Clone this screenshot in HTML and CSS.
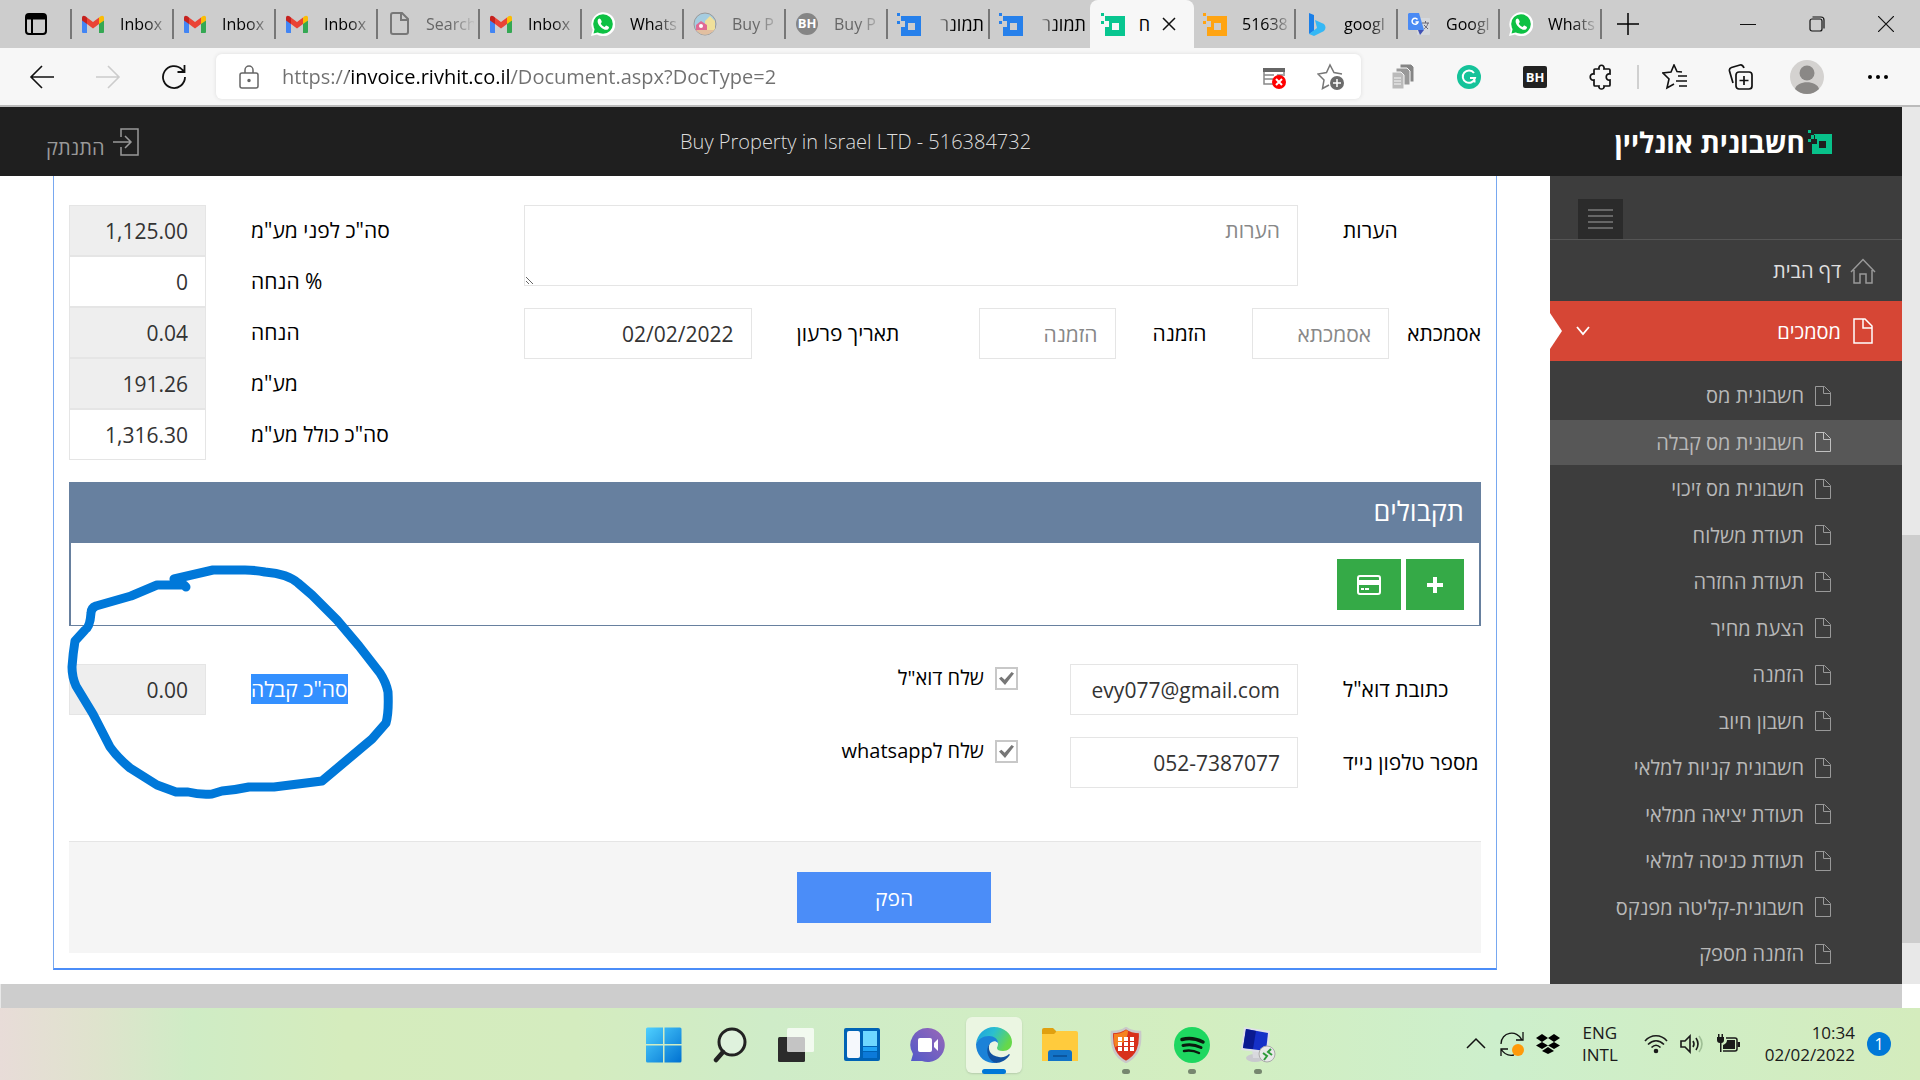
FILE: index.html
```html
<!DOCTYPE html>
<html lang="he">
<head>
    <meta charset="UTF-8">
    <meta name="viewport" content="width=device-width, initial-scale=1.0">
    <title>חשבונית אונליין</title>
    <link rel="stylesheet" href="styles.css">
</head>
<body>

    <!-- shared icons -->
    <svg class="sprite" width="0" height="0">
        <symbol id="gmail" viewBox="0 0 24 24">
            <path fill="#4285f4" d="M1 8v12a1 1 0 0 0 1 1h4V11z"/>
            <path fill="#34a853" d="M23 8v12a1 1 0 0 1-1 1h-4V11z"/>
            <path fill="#fbbc04" d="M18 5.500l1.500-1.200C21.500 3 23 4 23 6v2.500L18 12z"/>
            <path fill="#c5221f" d="M6 5.500L4.500 4.300C2.500 3 1 4 1 6v2.500L6 12z"/>
            <path fill="#ea4335" d="M6 5.500l6 4.500 6-4.500V12l-6 4.500L6 12z"/>
        </symbol>
        <symbol id="whatsapp" viewBox="0 0 24 24">
            <path fill="#fff" d="M0 24l1.700-6.200A12 12 0 1 1 6 22.400z"/>
            <circle cx="12" cy="12" r="9.800" fill="#0dc143"/>
            <path fill="#0dc143" d="M2.500 21.500l1.500-6 4.500 4.500z"/>
            <path fill="#fff" d="M8.600 6.500c-.4-.1-2 .6-2 2.700 0 4 5.200 8.600 8.700 8.600 1.600 0 2.700-1.200 2.700-2.600 0-.5-2.600-1.900-3-1.700l-1.300 1.500c-1.500-.5-3.200-2-3.900-3.600l1-1.400c.1-.5-1.200-3.400-2.200-3.500z"/>
        </symbol>
        <symbol id="pixel" viewBox="0 0 24 24">
            <path fill="currentColor" fill-rule="evenodd" d="M4 4h20v20H4v-9h4V9H4zM11 11v7h7v-7zM0 1h3v3H0zM0 9h3v3H0z"/>
        </symbol>
        <symbol id="page" viewBox="0 0 16 22">
            <path fill="none" stroke="currentColor" d="M.5 1.500h9l6 6v13H.5zM8.500 1.500v7h7"/>
        </symbol>
    </svg>

    <div class="tabs">
        <button class="tab-menu" aria-label="Tab actions">
            <svg width="24" height="24" viewBox="0 0 24 24" fill="none" stroke="#000" stroke-width="2"><rect x="2" y="2" width="20" height="20" rx="3"/><path d="M2 5h20" stroke-width="5"/><path d="M8 7v15"/></svg>
        </button>
        <button class="tab"><svg class="tab-icon"><use href="#gmail"/></svg><span class="tab-title">Inbox</span></button>
        <button class="tab"><svg class="tab-icon"><use href="#gmail"/></svg><span class="tab-title">Inbox</span></button>
        <button class="tab"><svg class="tab-icon"><use href="#gmail"/></svg><span class="tab-title">Inbox</span></button>
        <button class="tab dim"><svg class="tab-icon" viewBox="0 0 24 24" fill="none" stroke="#777" stroke-width="2"><path d="M6 1h9l6 6v13a2 2 0 0 1-2 2H6a2 2 0 0 1-2-2V3a2 2 0 0 1 2-2zM14 1v7h7"/></svg><span class="tab-title">Search</span></button>
        <button class="tab"><svg class="tab-icon"><use href="#gmail"/></svg><span class="tab-title">Inbox</span></button>
        <button class="tab"><svg class="tab-icon"><use href="#whatsapp"/></svg><span class="tab-title">Whats</span></button>
        <button class="tab dim"><svg class="tab-icon" viewBox="0 0 24 24"><circle cx="12" cy="12" r="11" fill="#a5cde0" stroke="#999"/><path fill="#f0e09a" d="M12 19V9l5-5 5 5v8l-3 3z"/><path fill="#e06a94" d="M3 19v-6l5-4 6 4v6z"/><path fill="#e2bfa0" d="M3 18h18a11 11 0 0 1-18 0z"/><circle cx="8" cy="14" r="2" fill="#fff"/></svg><span class="tab-title">Buy P</span></button>
        <button class="tab dim"><svg class="tab-icon" viewBox="0 0 24 24"><circle cx="12" cy="12" r="11" fill="#858585"/><text class="bh" x="12" y="16">BH</text></svg><span class="tab-title">Buy P</span></button>
        <button class="tab he"><svg class="tab-icon blue"><use href="#pixel"/></svg><span class="tab-title" dir="rtl">תמונר</span></button>
        <button class="tab he"><svg class="tab-icon blue"><use href="#pixel"/></svg><span class="tab-title" dir="rtl">תמונר</span></button>
        <button class="tab active"><svg class="tab-icon green"><use href="#pixel"/></svg><span class="tab-title" dir="rtl">ח</span><svg width="14" height="14" viewBox="0 0 14 14" stroke="#111" stroke-width="1.500"><path d="M1 1l12 12M13 1L1 13"/></svg></button>
        <button class="tab"><svg class="tab-icon orange"><use href="#pixel"/></svg><span class="tab-title">51638</span></button>
        <button class="tab"><svg class="tab-icon" viewBox="0 0 24 24"><path fill="#1b7fe8" d="M4 1l5 2v16l-5 3z"/><path fill="#35b8f5" d="M10 8l9 4c2 2 2 5 0 7L9 24l-5-2 8-6z"/></svg><span class="tab-title">googl</span></button>
        <button class="tab"><svg class="tab-icon" viewBox="0 0 24 24"><rect x="10" y="6" width="13" height="17" rx="1" fill="#d5d8dc"/><path fill="#3f51b5" d="M11 18h6l-4 5z"/><path fill="#4a8af4" d="M2 1h10l5 17H2a1 1 0 0 1-1-1V2z"/><path fill="none" stroke="#fff" stroke-width="1.500" d="M10.500 7.500A3 3 0 1 0 11 10H8.500"/><path fill="none" stroke="#667" d="M15 11h7M18.500 9v2M21 11c-1 4-3 5-4 6M17 13l4 4"/></svg><span class="tab-title">Googl</span></button>
        <button class="tab"><svg class="tab-icon"><use href="#whatsapp"/></svg><span class="tab-title">Whats</span></button>
        <button class="new-tab" aria-label="New tab"><svg width="22" height="22" viewBox="0 0 22 22" stroke="#000" stroke-width="1.500"><path d="M11 0v22M0 11h22"/></svg></button>
        <div class="window-buttons">
            <button aria-label="Minimize"><svg width="16" height="16" viewBox="0 0 16 16" stroke="#111"><path d="M0 8.500h16"/></svg></button>
            <button aria-label="Restore"><svg width="16" height="16" viewBox="0 0 16 16" fill="none" stroke="#111" stroke-width="1.200"><rect x="1" y="3" width="12" height="12" rx="2"/><path d="M3.500 1H12a3 3 0 0 1 3 3v8.500"/></svg></button>
            <button aria-label="Close"><svg width="16" height="16" viewBox="0 0 16 16" stroke="#111" stroke-width="1.200"><path d="M0 0l16 16M16 0L0 16"/></svg></button>
        </div>
    </div>

    <div class="toolbar">
        <div class="nav-buttons">
            <button aria-label="Back"><svg width="26" height="26" viewBox="0 0 26 26" fill="none" stroke="#111" stroke-width="1.600"><path d="M25 13H2M13 2L2 13l11 11"/></svg></button>
            <button aria-label="Forward"><svg width="26" height="26" viewBox="0 0 26 26" fill="none" stroke="#ccc" stroke-width="1.600"><path d="M1 13h23M13 2l11 11-11 11"/></svg></button>
            <button aria-label="Refresh"><svg width="26" height="26" viewBox="0 0 26 26" fill="none" stroke="#111" stroke-width="1.800"><path d="M24 13A11 11 0 1 1 21 5.500L23 7.500M23.500 1v7h-7"/></svg></button>
        </div>
        <div class="address">
            <svg width="20" height="24" viewBox="0 0 20 24" fill="none" stroke="#666" stroke-width="1.500"><rect x="1" y="8" width="18" height="15" rx="2"/><path d="M6 8V5a4 4 0 0 1 8 0v3"/><circle cx="10" cy="15.500" r="1" fill="#666"/></svg>
            <input class="url" type="text" aria-label="Address" value="https://invoice.rivhit.co.il/Document.aspx?DocType=2">
            <button aria-label="Pop-up blocked"><svg width="26" height="26" viewBox="0 0 26 26"><path fill="none" stroke="#888" stroke-width="1.500" d="M14 20H3V5h20v7M3 11h10M3 15h9M16 11h6"/><path fill="#666" d="M2 4h22v4H2z"/><circle cx="18" cy="18" r="7" fill="#f00"/><path stroke="#fff" stroke-width="2" d="M15 15l6 6M21 15l-6 6"/></svg></button>
            <button aria-label="Add to favorites"><svg width="28" height="28" viewBox="0 0 28 28"><path fill="none" stroke="#777" stroke-width="1.500" d="M25 11l-8-1.500L13 2 9.500 9.500 1 11l6 6-1.500 8.500L12 22"/><circle cx="20" cy="20" r="7" fill="#6b6b6b"/><path stroke="#fff" stroke-width="1.500" d="M20 16v8M16 20h8"/></svg></button>
        </div>
        <div class="extensions">
            <button aria-label="Copy pages"><svg width="24" height="26" viewBox="0 0 24 26" stroke="#f7f7f7"><path fill="#858585" d="M9 0h11l3 3v15H9z"/><path fill="#999" d="M5 4h11l3 3v14H5z"/><path fill="#bbb" d="M1 8h9l3 3v14H1z"/><path fill="none" d="M3 14h7M3 17h7M3 20h7"/></svg></button>
            <button aria-label="Grammar"><svg width="24" height="24" viewBox="0 0 24 24"><circle cx="12" cy="12" r="12" fill="#15c39a"/><path fill="none" stroke="#fff" stroke-width="2" d="M17 8a6.200 6.200 0 1 0 1 5h-5M17.500 17.500V13"/></svg></button>
            <button aria-label="BH"><svg width="24" height="24" viewBox="0 0 24 24"><rect y="1" width="24" height="22" rx="2" fill="#222"/><text class="bh" x="12" y="17">BH</text></svg></button>
            <button aria-label="Extensions"><svg width="24" height="26" viewBox="0 0 24 26" fill="none" stroke="#111" stroke-width="1.700"><path d="M6 5h4c-1-5 6-5 5 0h5a1 1 0 0 1 1 1v4c-5-1-5 7 0 6v5a1 1 0 0 1-1 1h-5c1 4-6 4-5 0H6a1 1 0 0 1-1-1v-5c-5 1-5-7 0-6V6a1 1 0 0 1 1-1z"/></svg></button>
            <span class="divider"></span>
            <button aria-label="Favorites"><svg width="26" height="26" viewBox="0 0 26 26" fill="none" stroke="#111" stroke-width="1.600"><path d="M20 8l-5-.5L12 1 9 8l-8 1 6 6-2 9 7-4M16 12h9M14 17h11M17 22h8"/></svg></button>
            <button aria-label="Collections"><svg width="26" height="26" viewBox="0 0 26 26" fill="none" stroke="#111" stroke-width="1.700"><path d="M5 19L1.500 7a3 3 0 0 1 2-3.500L12 1c2-.5 3 .5 4 3"/><rect x="8" y="8" width="16" height="17" rx="3"/><path d="M16 12v9M11.500 16.500h9"/></svg></button>
            <button aria-label="Profile"><svg width="34" height="34" viewBox="0 0 34 34"><circle cx="17" cy="17" r="17" fill="#d4d2d0"/><circle cx="17" cy="13" r="7.500" fill="#8a8886"/><path fill="#8a8886" d="M5 29c2-9 22-9 24 0a17 17 0 0 1-24 0z"/></svg></button>
            <button aria-label="Settings"><svg width="22" height="6" viewBox="0 0 22 6"><circle cx="3" cy="3" r="2"/><circle cx="11" cy="3" r="2"/><circle cx="19" cy="3" r="2"/></svg></button>
        </div>
    </div>

    <div class="viewport">
        <div class="site" dir="rtl">
            <header class="site-header">
                <a class="logo" href="#"><svg class="logo-icon" width="24" height="24" viewBox="0 0 24 24"><path fill="#08c18a" fill-rule="evenodd" d="M6 4h18v20H4V14h5V9H6zM11 11v7h7v-7zM0 0h3v3H0zM3 5h4v4H3zM0 9h3v3H0z"/></svg>חשבונית אונליין</a>
                <span class="company" dir="ltr">Buy Property in Israel LTD - 516384732</span>
                <a class="logout" href="#"><svg width="26" height="28" viewBox="0 0 26 28" fill="none" stroke="currentColor" stroke-width="1.500"><path d="M8 9V1h17v26H8v-8M0 14h18M12 8l6 6-6 6"/></svg>התנתק</a>
            </header>

            <div class="page">
                <nav class="sidebar">
                    <div class="toggler-row">
                        <button class="toggler" aria-label="תפריט"><span></span><span></span><span></span><span></span></button>
                    </div>
                    <a class="menu-item" href="#"><svg width="26" height="26" viewBox="0 0 26 26" fill="none" stroke="#999" stroke-width="1.500"><path d="M1 14L13 1.500 25 14M4 12v13h6v-9h6v9h6V12"/></svg>דף הבית</a>
                    <a class="menu-item current" href="#"><svg width="26" height="26" viewBox="0 0 26 26" fill="none" stroke="#fff" stroke-width="1.500"><path d="M4 1h11l7 7v17H4zM13 1v9h9"/></svg>מסמכים
                        <svg class="chevron" width="14" height="10" viewBox="0 0 14 10" fill="none" stroke="#fff" stroke-width="1.800"><path d="M1 1l6 7 6-7"/></svg>
                    </a>
                    <ul class="submenu">
                        <li><a href="#"><svg class="doc"><use href="#page"/></svg>חשבונית מס</a></li>
                        <li class="selected"><a href="#"><svg class="doc"><use href="#page"/></svg>חשבונית מס קבלה</a></li>
                        <li><a href="#"><svg class="doc"><use href="#page"/></svg>חשבונית מס זיכוי</a></li>
                        <li><a href="#"><svg class="doc"><use href="#page"/></svg>תעודת משלוח</a></li>
                        <li><a href="#"><svg class="doc"><use href="#page"/></svg>תעודת החזרה</a></li>
                        <li><a href="#"><svg class="doc"><use href="#page"/></svg>הצעת מחיר</a></li>
                        <li><a href="#"><svg class="doc"><use href="#page"/></svg>הזמנה</a></li>
                        <li><a href="#"><svg class="doc"><use href="#page"/></svg>חשבון חיוב</a></li>
                        <li><a href="#"><svg class="doc"><use href="#page"/></svg>חשבונית קניות למלאי</a></li>
                        <li><a href="#"><svg class="doc"><use href="#page"/></svg>תעודת יציאה ממלאי</a></li>
                        <li><a href="#"><svg class="doc"><use href="#page"/></svg>תעודת כניסה למלאי</a></li>
                        <li><a href="#"><svg class="doc"><use href="#page"/></svg>חשבונית-קליטה מפנקס</a></li>
                        <li><a href="#"><svg class="doc"><use href="#page"/></svg>הזמנה מספק</a></li>
                    </ul>
                </nav>

                <main class="content">
                    <form class="invoice">
                        <div class="section">
                            <div class="details">
                                <div class="row">
                                    <label class="row-label" for="notes">הערות</label>
                                    <textarea id="notes" class="input notes" placeholder="הערות"></textarea>
                                </div>
                                <div class="refs">
                                    <div class="field ref"><label for="ref">אסמכתא</label><input id="ref" class="input" type="text" placeholder="אסמכתא"></div>
                                    <div class="field order"><label for="order">הזמנה</label><input id="order" class="input" type="text" placeholder="הזמנה"></div>
                                    <div class="field due"><label for="due">תאריך פרעון</label><input id="due" class="input" type="text" value="02/02/2022"></div>
                                </div>
                            </div>
                            <div class="totals">
                                <label for="before">סה"כ לפני מע"מ</label><input id="before" class="input" type="text" value="1,125.00" readonly>
                                <label for="percent">% הנחה</label><input id="percent" class="input" type="text" value="0">
                                <label for="discount">הנחה</label><input id="discount" class="input" type="text" value="0.04" readonly>
                                <label for="vat">מע"מ</label><input id="vat" class="input" type="text" value="191.26" readonly>
                                <label for="total">סה"כ כולל מע"מ</label><input id="total" class="input" type="text" value="1,316.30">
                            </div>
                        </div>

                        <section class="receipts">
                            <h2>תקבולים</h2>
                            <div class="receipts-body">
                                <button type="button" class="green-btn add" aria-label="הוסף"><svg width="16" height="16" viewBox="0 0 16 16" fill="#fff"><path d="M6 0h4v6h6v4h-6v6H6v-6H0V6h6z"/></svg></button>
                                <button type="button" class="green-btn card" aria-label="כרטיס אשראי"><svg width="24" height="20" viewBox="0 0 24 20"><rect x="1" y="1" width="22" height="18" rx="2" fill="none" stroke="#fff" stroke-width="2"/><path fill="#fff" d="M1 5h22v5H1zM4 13h3v2H4zM8 13h4v2H8z"/></svg></button>
                            </div>
                        </section>

                        <div class="section send">
                            <div class="details">
                                <div class="row">
                                    <label class="row-label" for="email">כתובת דוא"ל</label>
                                    <input id="email" class="input contact" type="email" dir="ltr" value="evy077@gmail.com">
                                    <div class="check"><input id="send-mail" type="checkbox" checked><label for="send-mail">שלח דוא"ל</label></div>
                                </div>
                                <div class="row">
                                    <label class="row-label" for="phone">מספר טלפון נייד</label>
                                    <input id="phone" class="input contact" type="tel" dir="ltr" value="052-7387077">
                                    <div class="check"><input id="send-wa" type="checkbox" checked><label for="send-wa">שלח לwhatsapp</label></div>
                                </div>
                            </div>
                            <div class="totals">
                                <label for="receipt"><span class="marked">סה"כ קבלה</span></label><input id="receipt" class="input" type="text" value="0.00" readonly>
                            </div>
                        </div>

                        <div class="actions">
                            <button type="button" class="submit">הפק</button>
                        </div>
                    </form>

                    <!-- pen mark round the receipt total -->
                    <svg class="ink" width="420" height="640" viewBox="0 176 420 640" fill="none" stroke="#0078d9" stroke-width="9" stroke-linecap="round" stroke-linejoin="round">
                        <path d="M186 587L184 585H157L131 596 96 606Q91 608 91 613 90 627 85 630L75 641Q73 653 72 667 72 677 76 686L93 714 110 747Q117 757 130 768L157 785 176 792 188 792Q200 795 212 794L222 791Q235 790 249 787H274L322 781 347 760 372 739 386 723Q389 712 388 692 386 682 380 673L359 646 337 620 312 595 298 583Q288 574 265 572 255 570 245 570H213L174 579 176 584"/>
                    </svg>
                </main>
            </div>
        </div>
        <div class="scroll-y"><div class="thumb-y"></div></div>
        <div class="scroll-x"></div>
        <div class="scroll-corner"></div>
    </div>

    <footer class="taskbar">
        <div class="apps">
            <button aria-label="Start"><svg width="36" height="36" viewBox="0 0 36 36"><defs><linearGradient id="win" x1="0" y1="0" x2="1" y2="1"><stop offset="0" stop-color="#4fd0ff"/><stop offset="1" stop-color="#0071d1"/></linearGradient></defs><path fill="url(#win)" d="M0 2q0-1.500 1.500-1.500H17V17H0zM18.500.5H34q1.500 0 1.500 1.500v15h-17zM0 18.500h17v17H1.500Q0 35.500 0 34zM18.500 18.500h17V34q0 1.500-1.500 1.500H18.500z"/></svg></button>
            <button aria-label="Search"><svg width="36" height="36" viewBox="0 0 36 36" fill="none" stroke="#222" stroke-width="3.500" stroke-linecap="round"><circle cx="20" cy="15" r="13" fill="#dff2dd" stroke-width="3"/><path d="M11 25l-7 8" stroke-width="4.500"/></svg></button>
            <button aria-label="Task view"><svg width="36" height="36" viewBox="0 0 36 36"><rect y="10" width="27" height="25" rx="1.500" fill="#2b2b2b"/><rect x="9" y="1" width="27" height="24" rx="1.500" fill="#fff" fill-opacity=".72"/></svg></button>
            <button aria-label="Widgets"><svg width="36" height="36" viewBox="0 0 36 36"><rect y="1" width="36" height="33" rx="2" fill="#0063b5"/><rect x="3" y="4" width="13" height="27" rx="2" fill="#f5f8fc"/><path fill="#6fd8ff" d="M19 4h14v15H19z"/><path fill="#20a3f5" d="M19 20h14v4H19z"/><path fill="#0c7ad9" d="M19 25h14v6H19z"/></svg></button>
            <button aria-label="Chat"><svg width="36" height="36" viewBox="0 0 36 36"><defs><linearGradient id="chat" x1="1" y1="0" x2="0" y2="1"><stop offset="0" stop-color="#9a68b8"/><stop offset="1" stop-color="#5059c9"/></linearGradient></defs><path fill="url(#chat)" d="M18 1a17 17 0 1 1-6 33H1l2-7A17 17 0 0 1 18 1z"/><rect x="8" y="11" width="14" height="14" rx="2" fill="#fff"/><path fill="#fff" d="M24 16l4-4v12l-4-4z"/></svg></button>
            <button class="open" aria-label="Edge"><svg width="36" height="36" viewBox="0 0 36 36"><defs><linearGradient id="edge" x1="0" y1="0" x2="1" y2=".4"><stop offset="0" stop-color="#1b9de2"/><stop offset=".5" stop-color="#2bbfcf"/><stop offset="1" stop-color="#66d84a"/></linearGradient></defs><path fill="url(#edge)" d="M0 17C1 7 9 0 18 0c10 0 18 7 18 15 0 6-4 9-9 9-4 0-6-1-6-3 0-1 1-2 1-4 0-4-4-7-9-7-6 0-11 3-13 7z"/><path fill="#1b82d8" d="M0 17c2-5 7-8 13-8 5 0 9 3 9 7-2-2-4-2-6-1-4 2-5 7-3 12 1 4 4 7 7 9C8 37 0 28 0 17z"/><path fill="#1152a0" d="M14 16c-3 6 0 13 9 14 4 1 8-1 10-3 1 0 1 1 0 2-3 4-8 7-13 7-7-2-12-12-6-20z"/></svg></button>
            <button aria-label="Explorer"><svg width="36" height="36" viewBox="0 0 36 36"><path fill="#e0a010" d="M0 3q0-2 2-2h9l4 4v5H0z"/><path fill="#ffcb3d" d="M0 7h12l3-3h19q2 0 2 2v28H0z"/><path fill="#1273c7" d="M6 34V26q0-3 3-3h18q3 0 3 3v8z"/><path stroke="#0a4d92" stroke-width="1.500" d="M11 29h14"/></svg></button>
            <button class="running" aria-label="Security"><svg width="36" height="36" viewBox="0 0 36 36"><path fill="#d8301c" stroke="#c9c9c9" stroke-width="2.500" d="M18 1c4 3 9 4 14 4 1 14-2 24-14 30C6 29 3 19 4 5c5 0 10-1 14-4z"/><path fill="#f58220" d="M18 3c-4 3-8 4-12 4 0 6 0 9 1 13C14 18 20 12 20 4z"/><path fill="#fff" d="M10 10h4v4h-4zM16 10h4v4h-4zM22 10h4v4h-4zM10 15h4v4h-4zM22 15h4v4h-4zM16 15h4v4h-4zM10 20h4v4h-4zM16 20h4v4h-4zM22 20h4v4h-4z"/></svg></button>
            <button class="running" aria-label="Music"><svg width="36" height="36" viewBox="0 0 36 36"><circle cx="18" cy="18" r="18" fill="#1ed760"/><path fill="none" stroke="#0a1a0e" stroke-linecap="round" stroke-width="3.500" d="M8 12.500c7-2 14-1 21 2.500"/><path fill="none" stroke="#0a1a0e" stroke-linecap="round" stroke-width="3" d="M9 18.500c6-1.500 12-1 18 2"/><path fill="none" stroke="#0a1a0e" stroke-linecap="round" stroke-width="2.500" d="M10 24c5-1 10-.5 15 2"/></svg></button>
            <button class="running" aria-label="Remote desktop"><svg width="36" height="36" viewBox="0 0 36 36"><ellipse cx="15" cy="31" rx="9" ry="4" fill="#c9c9cf"/><path fill="#d9d9de" d="M12 22h9l-1 9h-7z"/><path fill="#dfe1e8" d="M4 0l26 4-2 22L1 23z"/><path fill="#1530c8" d="M6 2l22 4-2 18L3 21z"/><path fill="#0a1a90" d="M6 2l10 2-3 18-10-1z"/><circle cx="27" cy="27" r="8" fill="#e8e8e8" stroke="#aaa"/><path fill="none" stroke="#2e9b3a" stroke-width="2" d="M23 26l4 3-3 4M31 22l-3 3 4 3"/></svg></button>
        </div>
        <div class="tray">
            <button aria-label="Show hidden icons"><svg width="24" height="24" viewBox="0 0 24 24" fill="none" stroke="#111" stroke-width="1.500"><path d="M3 16l9-9 9 9"/></svg></button>
            <button aria-label="Updates"><svg width="24" height="24" viewBox="0 0 24 24"><path fill="none" stroke="#111" stroke-width="1.300" d="M1 12C1 0 17-3 22 8M23 0v8h-7M1 24v-7h7M1 17c3 5 8 7 13 6"/><circle cx="18" cy="18" r="6" fill="#ff9a0a"/></svg></button>
            <button aria-label="Dropbox"><svg width="24" height="24" viewBox="0 0 24 24"><path d="M6 2l6 4-6 4-6-4zM18 2l6 4-6 4-6-4zM6 10l6 3.500L6 17l-6-3.500zM18 10l6 3.500L18 17l-6-3.500zM12 15l6 4-6 3-6-3z"/></svg></button>
            <button class="lang">ENG<br>INTL</button>
            <button class="status" aria-label="Network, volume, battery">
                <svg width="24" height="24" viewBox="0 0 24 24" fill="none" stroke="#1a1a1a" stroke-width="1.600"><path d="M1 9c6-7 16-7 22 0M4 12.500c5-5 11-5 16 0M7.500 15.500c3-3 6-3 9 0"/><circle cx="12" cy="19" r="1.500" fill="#1a1a1a"/></svg>
                <svg width="24" height="24" viewBox="0 0 24 24" fill="none" stroke="#1a1a1a" stroke-width="1.600"><path d="M1 9v6h4l5 5V4L5 9z"/><path d="M13 9q2 3 0 6M16 6q4 6 0 12"/><path stroke="#9fbf95" d="M19 4q6 8 0 16"/></svg>
                <svg width="24" height="24" viewBox="0 0 24 24" fill="#1a1a1a"><path d="M1 5h1V2h1.500v3h2V2H7v3h1v3c0 2-1 3-2.500 3v9h-1.500v-9C2 11 1 10 1 8z"/><path fill="none" stroke="#1a1a1a" stroke-width="1.500" d="M10 6h9a2 2 0 0 1 2 2v9a2 2 0 0 1-2 2H7"/><path d="M11 8h8v9H7v-4c2-1 4-2 4-5zM21.500 10h2.500v5h-2.500z"/></svg>
            </button>
            <button class="clock">10:34<br>02/02/2022</button>
            <span class="badge">1</span>
        </div>
    </footer>

</body>
</html>
```
FILE: styles.css
```css
* {
    box-sizing: border-box;
}
body {
    margin: 0;
    height: 100vh;
    display: flex;
    flex-direction: column;
    overflow: hidden;
    font-family: "Open Sans", "Noto Sans", sans-serif;
    font-size: 20px;
    background: #fff;
}
button {
    border: none;
    background: none;
    padding: 0;
    margin: 0;
    font: inherit;
    color: inherit;
    cursor: pointer;
}
a {
    color: inherit;
    text-decoration: none;
}
svg {
    display: block;
    flex: none;
}
.sprite {
    position: absolute;
}
.bh {
    font-size: 13px;
    font-weight: 700;
    fill: #fff;
    text-anchor: middle;
}

/* browser tabs */
.tabs {
    display: flex;
    height: 48px;
    background: #cdcdcd;
    font-size: 16px;
}
.tab-menu {
    width: 70px;
    padding-left: 24px;
}
.tab {
    display: flex;
    align-items: center;
    gap: 15px;
    width: 102px;
    padding: 0 4px 0 11px;
    background: linear-gradient(#777, #777) left center / 2px 30px no-repeat;
}
.tab-icon {
    width: 24px;
    height: 24px;
}
.tab-title {
    flex: 1;
    min-width: 0;
    white-space: nowrap;
    text-align: start;
    -webkit-mask-image: linear-gradient(90deg, #000 50%, transparent 105%);
    mask-image: linear-gradient(90deg, #000 50%, transparent 105%);
}
.tab.he .tab-title {
    -webkit-mask-image: linear-gradient(270deg, #000 60%, transparent);
    mask-image: linear-gradient(270deg, #000 60%, transparent);
}
.tab.he {
    font-size: 18px;
}
.dim .tab-title {
    color: #666;
}
.tab.active {
    width: 104px;
    margin-right: -2px;
    padding-right: 18px;
    gap: 12px;
    background: #f7f7f7;
    border-radius: 8px 8px 0 0;
    font-size: 18px;
}
.tab.active .tab-title {
    -webkit-mask-image: none;
    mask-image: none;
}
.tab.active + .tab {
    background: none;
}
.blue {
    color: #2680eb;
}
.green {
    color: #08c690;
}
.orange {
    color: #ffa412;
}
.new-tab {
    width: 56px;
    padding-left: 17px;
    background: linear-gradient(#777, #777) left center / 2px 30px no-repeat;
}
.window-buttons {
    display: flex;
    margin-left: auto;
}
.window-buttons button {
    display: flex;
    align-items: center;
    justify-content: center;
    width: 69px;
}

/* address bar */
.toolbar {
    display: flex;
    align-items: center;
    height: 59px;
    background: #f7f7f7;
    border-bottom: 2px solid #bbb;
}
.nav-buttons {
    display: flex;
    gap: 40px;
    padding: 0 29px 0 29px;
}
.address {
    flex: 1;
    display: flex;
    align-items: center;
    gap: 30px;
    height: 45px;
    padding: 0 16px 0 23px;
    background: #fff;
    border-radius: 6px;
    box-shadow: 0 0 4px #ddd;
}
/* the host name is darker than the rest of the address */
.url {
    flex: 1;
    min-width: 0;
    margin-left: -7px;
    padding: 0;
    border: none;
    outline: none;
    font: inherit;
    color: #707070;
    background: linear-gradient(90deg, #707070 67px, #000 67px 229px, #707070 229px);
    -webkit-background-clip: text;
    background-clip: text;
    -webkit-text-fill-color: transparent;
}
.extensions {
    display: flex;
    align-items: center;
    padding: 0 4px 0 9px;
}
.extensions button {
    display: flex;
    justify-content: center;
    width: 66px;
}
.extensions button:last-child {
    width: 76px;
}
.divider {
    width: 2px;
    height: 24px;
    margin: 0 3px;
    background: #d0d0d0;
}

/* page area with its scrollbars */
.viewport {
    flex: 1;
    min-height: 0;
    display: grid;
    grid-template-columns: 1fr 18px;
    grid-template-rows: 1fr 24px;
}
.site {
    min-height: 0;
    display: flex;
    flex-direction: column;
}
.scroll-y {
    background: #e8e8e8;
    padding-top: 428px;
}
.thumb-y {
    height: 408px;
    background: #cdcdcd;
}
.scroll-x {
    background: #cdcdcd;
    border-left: 1px solid #e8e8e8;
}
.scroll-corner {
    background: #fff;
}

.site-header {
    display: grid;
    grid-template-columns: 24fr auto 19fr;
    align-items: center;
    height: 69px;
    padding: 0 70px 0 46px;
    background: #1f1f1f;
    color: #ddd;
}
.logo {
    display: flex;
    align-items: center;
    gap: 3px;
    color: #fff;
    font-size: 28px;
    font-weight: 700;
    white-space: nowrap;
}
.company {
    font-weight: 300;
}
.logout {
    justify-self: end;
    display: flex;
    align-items: flex-end;
    gap: 9px;
    color: #999;
    line-height: 16px;
}
.page {
    flex: 1;
    min-height: 0;
    display: flex;
}

/* side menu */
.sidebar {
    width: 352px;
    display: flex;
    flex-direction: column;
    background: #3d3d3d;
    color: #b8b8b8;
}
.toggler-row {
    display: flex;
    justify-content: flex-end;
    align-items: flex-end;
    height: 64px;
    padding-left: 28px;
    border-bottom: 1px solid #555;
}
.toggler {
    display: flex;
    flex-direction: column;
    justify-content: center;
    gap: 4px;
    width: 45px;
    height: 40px;
    padding: 0 10px;
    background: #2b2b2b;
}
.toggler span {
    height: 2px;
    background: #666;
}
.menu-item {
    display: flex;
    align-items: center;
    gap: 9px;
    height: 61px;
    padding: 0 26px 0 33px;
    color: #e0e0e0;
}
.menu-item.current {
    position: relative;
    height: 60px;
    padding-left: 26px;
    background: #d64635;
    color: #fff;
}
.menu-item.current::after {
    content: "";
    position: absolute;
    left: 0;
    top: 12px;
    border-left: 12px solid #fff;
    border-top: 18px solid transparent;
    border-bottom: 18px solid transparent;
}
.chevron {
    margin-right: auto;
}
.submenu {
    flex: 1;
    display: flex;
    flex-direction: column;
    justify-content: space-between;
    margin: 0;
    padding: 12px 0 8px;
    list-style: none;
}
.submenu a {
    display: flex;
    align-items: center;
    gap: 11px;
    height: 45px;
    padding-right: 71px;
}
.submenu .selected {
    background: #575757;
}
.doc {
    width: 16px;
    height: 22px;
    color: #999;
}
.selected .doc {
    color: #c0c0c0;
}

/* invoice form */
.content {
    position: relative;
    flex: 1;
    min-width: 0;
    padding: 0 53px 14px;
}
.invoice {
    display: flex;
    flex-direction: column;
    height: 100%;
    padding: 29px 15px 15px;
    border: 1px solid #78a8f0;
    border-top: none;
    border-bottom: 2px solid #4b8df8;
    font-size: 21px;
}
.section {
    display: flex;
    gap: 69px;
}
.details {
    flex: 1;
    display: flex;
    flex-direction: column;
    gap: 22px;
}
.row {
    display: flex;
}
.row-label {
    width: 138px;
    margin-left: 45px;
    line-height: 51px;
    text-align: left;
    white-space: nowrap;
}
.input {
    height: 51px;
    padding: 0 17px;
    border: 1px solid #e5e5e5;
    border-radius: 0;
    outline: none;
    background: #fff;
    color: #333;
    font: inherit;
    text-align: right;
    min-width: 0;
}
.input::placeholder {
    color: #888;
}
.input[readonly] {
    background: #eee;
}
.notes {
    flex: 1;
    height: 81px;
    padding-top: 10px;
    display: block;
}
.refs {
    display: grid;
    grid-template-columns: 229fr 273fr 455fr;
}
.field {
    display: flex;
}
.field label {
    flex: 1;
    line-height: 51px;
    text-align: left;
    white-space: nowrap;
    padding-left: 45px;
}
.field .input {
    width: 50%;
}
.ref label {
    padding-left: 18px;
}
.ref .input {
    width: 60%;
}
.order label {
    padding-left: 37px;
}
.totals {
    display: grid;
    grid-template-columns: 1fr 137px;
    align-content: start;
    column-gap: 45px;
    width: 386px;
}
.totals label {
    line-height: 51px;
    text-align: left;
}
.receipts {
    margin-top: 22px;
    border: 2px solid #67809f;
    border-width: 0 2px 1px;
}
.receipts h2 {
    margin: 0;
    height: 61px;
    padding: 0 15px;
    background: #67809f;
    color: #fff;
    font-size: 27px;
    font-weight: 400;
    line-height: 58px;
}
.receipts-body {
    display: flex;
    gap: 5px;
    padding: 16px 15px 15px;
}
.green-btn {
    display: flex;
    align-items: center;
    justify-content: center;
    height: 51px;
    background: #35aa47;
}
.add {
    width: 58px;
}
.card {
    width: 64px;
}
.send {
    margin-top: 38px;
}
.contact {
    width: 228px;
}
.check {
    display: flex;
    gap: 11px;
    margin-right: 52px;
    font-size: 20px;
    line-height: 28px;
}
.check input {
    appearance: none;
    width: 23px;
    height: 23px;
    margin: 3px 0 0;
    border: 2px solid #c8c8c8;
    background: #fff;
}
.check input:checked::before {
    content: "";
    display: block;
    width: 15px;
    height: 13px;
    margin: 3px 2px;
    background: #777;
    clip-path: polygon(0 50%, 16% 36%, 38% 60%, 84% 0, 100% 12%, 40% 100%);
}
.marked {
    display: inline-block;
    line-height: 30px;
    background: #3390ff;
    color: #fff;
}
.actions {
    margin-top: auto;
    height: 112px;
    display: grid;
    grid-template-columns: 490fr 194px 728fr;
    align-items: center;
    background: #f5f5f5;
    border-top: 1px solid #e5e5e5;
}
.submit {
    grid-column: 2;
    height: 51px;
    background: #4b8df8;
    color: #fff;
}
.ink {
    position: absolute;
    left: 0;
    top: 0;
    pointer-events: none;
}

/* taskbar */
.taskbar {
    position: relative;
    display: flex;
    justify-content: center;
    height: 72px;
    background: linear-gradient(90deg, #e8dcd8, #dfe3cd 5%, #cfecc5 10%, #d5ecbd 18%, #d4ecbf 30%, #cfecc8 40%, #d3eec0 62%, #cdefcc 78%, #d4ecbd);
    color: #1a1a1a;
    font-size: 17px;
}
.apps {
    display: flex;
    align-items: center;
    gap: 10px;
    padding: 2px 0 0 2px;
}
.apps button {
    position: relative;
    display: flex;
    align-items: center;
    justify-content: center;
    width: 56px;
    height: 56px;
    border-radius: 6px;
}
.apps .open {
    background: #ebf6e2;
    box-shadow: 0 1px 2px #b5ccab;
}
.apps .open::after,
.apps .running::after {
    content: "";
    position: absolute;
    bottom: -1px;
    width: 8px;
    height: 5px;
    border-radius: 3px;
    background: #76876f;
}
.apps .open::after {
    width: 24px;
    background: #0078d7;
}
.tray {
    position: absolute;
    right: 29px;
    top: 0;
    height: 72px;
    display: flex;
    align-items: center;
    gap: 12px;
    line-height: 22px;
}
.lang {
    margin: 0 14px 0 10px;
}
.status {
    display: flex;
    gap: 12px;
}
.clock {
    margin-left: 13px;
    text-align: right;
}
.badge {
    width: 24px;
    height: 24px;
    border-radius: 50%;
    background: #0078d7;
    color: #fff;
    font-size: 16px;
    line-height: 24px;
    text-align: center;
}
```
